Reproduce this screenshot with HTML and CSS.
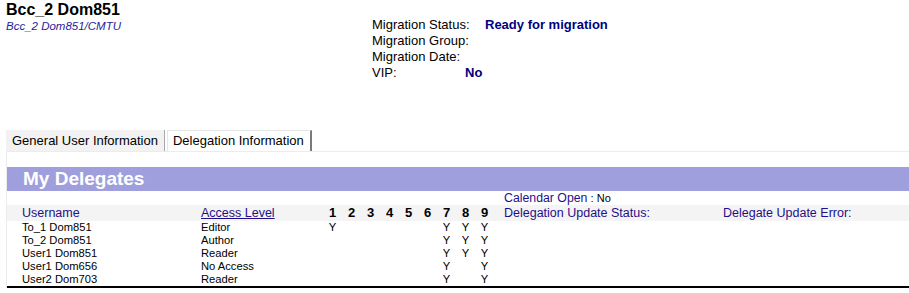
FILE: index.html
```html
<!DOCTYPE html>
<html lang="en">
<head>
    <meta charset="UTF-8">
    <title>Bcc_2 Dom851 - Delegation Information</title>
    <link rel="stylesheet" href="styles.css">
</head>
<body>
    <div class="page">
        <div class="top">
            <div class="ident">
                <h1>Bcc_2 Dom851</h1>
                <div class="path">Bcc_2 Dom851/CMTU</div>
            </div>
            <div class="migration">
                <div class="mig-row"><span class="lbl lbl-status">Migration Status:</span><span class="val">Ready for migration</span></div>
                <div class="mig-row"><span class="lbl">Migration Group:</span></div>
                <div class="mig-row"><span class="lbl">Migration Date:</span></div>
                <div class="mig-row"><span class="lbl lbl-vip">VIP:</span><span class="val">No</span></div>
            </div>
        </div>

        <div class="tabs">
            <div class="tab">General User Information</div>
            <div class="tab active">Delegation Information</div>
        </div>

        <div class="panel">
            <div class="section-title">My Delegates</div>
            <table class="delegates">
                <colgroup>
                    <col class="c-user">
                    <col class="c-access">
                    <col class="c-num"><col class="c-num"><col class="c-num">
                    <col class="c-num"><col class="c-num"><col class="c-num">
                    <col class="c-num"><col class="c-num"><col class="c-num">
                    <col class="c-status">
                    <col>
                </colgroup>
                <tr class="calendar">
                    <td colspan="11"></td>
                    <td colspan="2" class="status"><span class="head">Calendar Open</span> : <span class="small">No</span></td>
                </tr>
                <tr class="head-row">
                    <th class="user">Username</th>
                    <th><a class="sort">Access Level </a></th>
                    <th class="num">1</th><th class="num">2</th><th class="num">3</th>
                    <th class="num">4</th><th class="num">5</th><th class="num">6</th>
                    <th class="num">7</th><th class="num">8</th><th class="num">9</th>
                    <th class="status">Delegation Update Status:</th>
                    <th>Delegate Update Error:</th>
                </tr>
                <tr>
                    <td class="user">To_1 Dom851</td><td>Editor</td>
                    <td class="num">Y</td><td></td><td></td><td></td><td></td><td></td>
                    <td class="num">Y</td><td class="num">Y</td><td class="num">Y</td>
                    <td></td><td></td>
                </tr>
                <tr>
                    <td class="user">To_2 Dom851</td><td>Author</td>
                    <td></td><td></td><td></td><td></td><td></td><td></td>
                    <td class="num">Y</td><td class="num">Y</td><td class="num">Y</td>
                    <td></td><td></td>
                </tr>
                <tr>
                    <td class="user">User1 Dom851</td><td>Reader</td>
                    <td></td><td></td><td></td><td></td><td></td><td></td>
                    <td class="num">Y</td><td class="num">Y</td><td class="num">Y</td>
                    <td></td><td></td>
                </tr>
                <tr>
                    <td class="user">User1 Dom656</td><td>No Access</td>
                    <td></td><td></td><td></td><td></td><td></td><td></td>
                    <td class="num">Y</td><td></td><td class="num">Y</td>
                    <td></td><td></td>
                </tr>
                <tr>
                    <td class="user">User2 Dom703</td><td>Reader</td>
                    <td></td><td></td><td></td><td></td><td></td><td></td>
                    <td class="num">Y</td><td></td><td class="num">Y</td>
                    <td></td><td></td>
                </tr>
            </table>
        </div>
    </div>
</body>
</html>
```

FILE: styles.css
```css
body {
    margin: 0;
    font-family: "Liberation Sans", Arial, sans-serif;
    color: #000;
    background-color: #fff;
}
.page {
    padding-left: 6px;
}
.top {
    display: flex;
    height: 130px;
}
.ident {
    width: 366px;
}
.ident h1 {
    margin: 0;
    font-size: 16px;
    line-height: 20px;
    font-weight: bold;
}
.path {
    font-size: 11.5px;
    font-style: italic;
    color: #1e1e9c;
    line-height: 13px;
}
.migration {
    padding-top: 17px;
    font-size: 13px;
}
.mig-row {
    display: flex;
    height: 16px;
    line-height: 16px;
}
.mig-row .lbl-status {
    width: 113px;
}
.mig-row .lbl-vip {
    width: 93px;
}
.mig-row .val {
    font-weight: bold;
    color: #000080;
}
.tabs {
    display: flex;
    height: 21px;
    font-size: 13px;
}
.tab {
    padding: 0 6px;
    line-height: 21px;
    background-color: #f2f2f2;
    border-right: 1px solid #a8a8a8;
    margin-right: 2px;
}
.tab.active {
    background-color: #fff;
    border-top: 1px solid #e6e6e6;
    border-left: 1px solid #e6e6e6;
    border-right: 2px solid #7a7a7a;
    line-height: 20px;
    padding: 0 6px 0 5px;
}
.panel {
    border-top: 1px solid #ececec;
    border-left: 1px solid #ececec;
    padding-top: 15px;
}
.section-title {
    background-color: #a09fdd;
    color: #fff;
    font-size: 19px;
    font-weight: bold;
    line-height: 24px;
    padding-left: 16px;
}
.delegates {
    width: 100%;
    border-collapse: collapse;
    table-layout: fixed;
    font-size: 11.2px;
    border-bottom: 2px solid #000;
}
.delegates col.c-user { width: 194px; }
.delegates col.c-access { width: 122px; }
.delegates col.c-num { width: 19px; }
.delegates col.c-status { width: 229px; }
.delegates td,
.delegates th {
    padding: 0;
    text-align: left;
    white-space: nowrap;
    line-height: 13px;
    height: 13px;
}
.delegates .user {
    padding-left: 15px;
}
.delegates .num {
    text-align: center;
}
.delegates .status {
    padding-left: 10px;
}
.calendar td {
    height: 14px;
    line-height: 14px;
    vertical-align: bottom;
}
.calendar .head {
    font-size: 12.3px;
    color: #1f0f88;
}
.calendar .small {
    font-size: 11px;
}
.head-row th {
    background-color: #f4f4f4;
    font-weight: normal;
    font-size: 12.5px;
    color: #1f0f88;
    height: 16px;
    line-height: 16px;
    vertical-align: bottom;
}
.head-row th.num {
    font-weight: bold;
    font-size: 13px;
    color: #000;
}
.head-row .sort {
    text-decoration: underline;
    color: #1f0f88;
    cursor: pointer;
}
```
